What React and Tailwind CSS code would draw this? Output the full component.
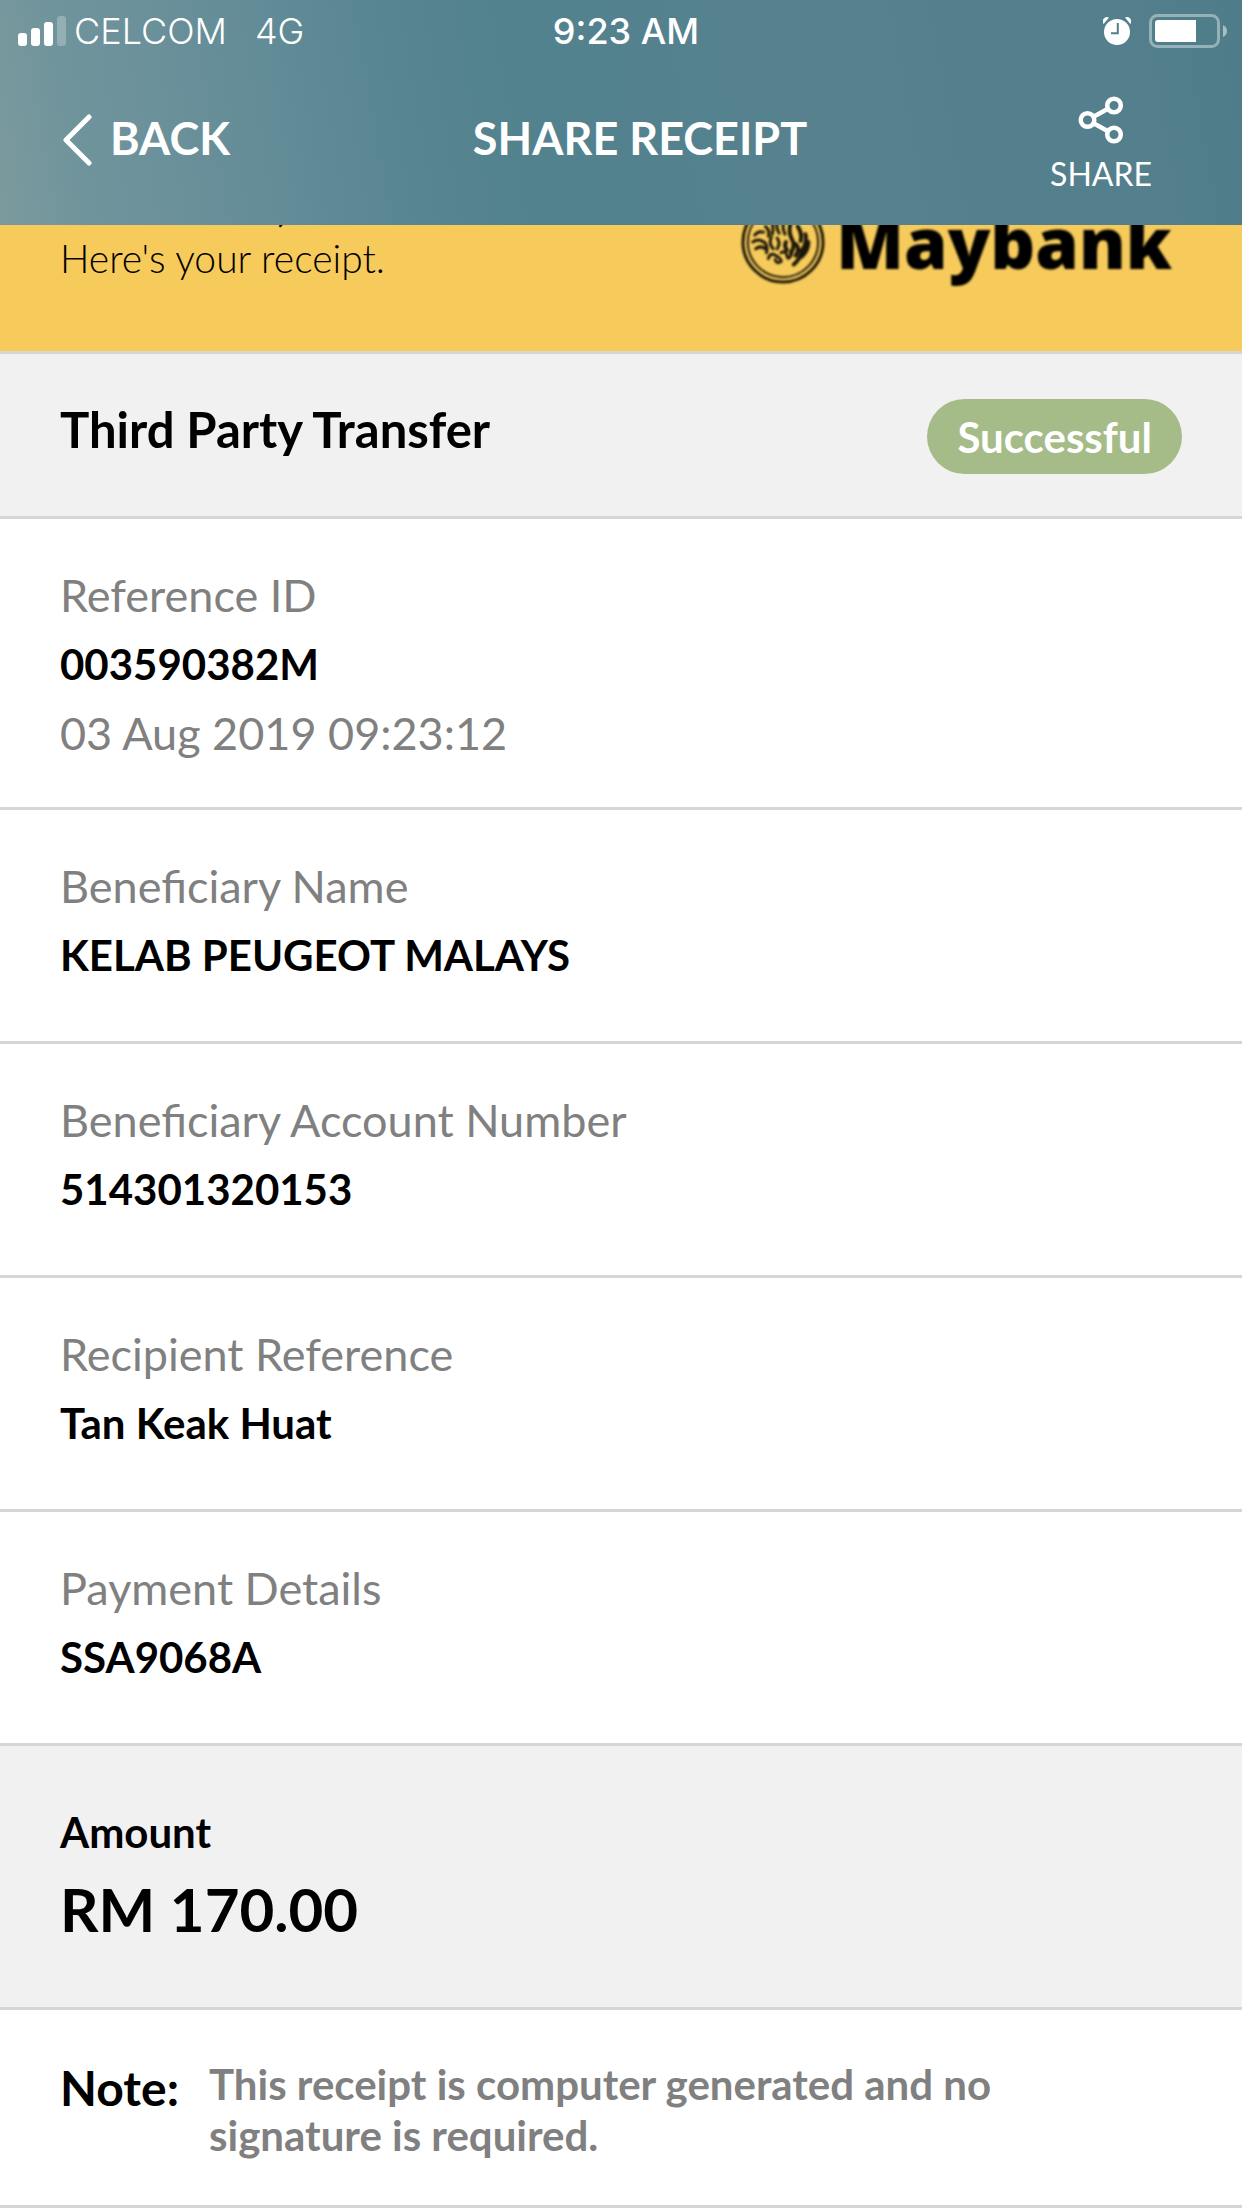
const details = [
  { label: 'Reference ID', value: '003590382M', extra: '03 Aug 2019 09:23:12' },
  { label: 'Beneficiary Name', value: 'KELAB PEUGEOT MALAYS' },
  { label: 'Beneficiary Account Number', value: '514301320153' },
  { label: 'Recipient Reference', value: 'Tan Keak Huat' },
  { label: 'Payment Details', value: 'SSA9068A' },
];

function SignalIcon() {
  return (
    <svg width="48" height="30" viewBox="0 0 48 30" fill="#fff" aria-hidden="true">
      <rect x="0" y="17" width="9" height="13" rx="3" />
      <rect x="13" y="12" width="9" height="18" rx="3" />
      <rect x="26" y="6" width="9" height="24" rx="3" />
      <rect x="39" y="0" width="9" height="30" rx="3" opacity=".25" />
    </svg>
  );
}

function AlarmIcon() {
  return (
    <svg width="28" height="28" viewBox="0 0 28 28" aria-hidden="true">
      <circle cx="14" cy="15" r="13" fill="#fff" />
      <path d="M0 6.500A4.500 4.500 0 0 1 6 .6L.8 6.800ZM28 6.500A4.500 4.500 0 0 0 22 .6L27.200 6.800Z" fill="#fff" />
      <path d="M14.800 6v10.300H8" fill="none" stroke="#50808c" strokeWidth="2" />
    </svg>
  );
}

function BatteryIcon() {
  return (
    <svg width="79" height="34" viewBox="0 0 79 34" aria-hidden="true">
      <rect x="1.500" y="1.500" width="68" height="31" rx="7" fill="none" stroke="#fff" strokeWidth="3" opacity=".4" />
      <path d="M9 6H47V28H9Q6 28 6 25V9Q6 6 9 6Z" fill="#fff" />
      <path d="M74 11Q78 13 78 17T74 23Z" fill="#fff" opacity=".5" />
    </svg>
  );
}

function ShareIcon() {
  return (
    <svg width="46" height="48" viewBox="0 0 46 48" fill="none" stroke="#fff" strokeWidth="4.500" aria-hidden="true">
      <circle cx="9.500" cy="24" r="6.800" />
      <circle cx="36" cy="9.500" r="6.800" />
      <circle cx="36" cy="38.500" r="6.800" />
      <path d="M15.500 20.700L30 12.800M15.500 27.300L30 35.200" />
    </svg>
  );
}

function TigerEmblem() {
  return (
    <svg width="84" height="84" viewBox="0 0 86 86" fill="none" stroke="#1a1608" strokeLinecap="round" aria-hidden="true">
      <circle cx="43" cy="43" r="41" strokeWidth="3" />
      <circle cx="43" cy="43" r="36" strokeWidth="2" />
      <path strokeWidth="3" d="M14 36q4-5 9-3M12 43q6-4 11 0M15 50q5-4 10 0M25 27q5 4 3 10M31 22q3 6 1 13M38 20q-3 7 1 14M45 19q-4 7 0 16M24 43q4 5 2 11M31 38q-3 7 2 12M37 39q4 5 0 11M28 60q2-7 8-3t5 6q-5 3-6-2M41 54q5-3 6 3t5-2" />
      <path strokeWidth="4" d="M51 23q-3 10 1 17t-1 14M58 27q5 7 3 15M66 35q2 9-4 17M56 45q5 5 0 12M69 43q0 9-7 15M63 52q-3 9-9 14M46 43q-2 5 1 8" />
    </svg>
  );
}

export default function App() {
  return (
    <div className="w-full bg-white font-['Lato',sans-serif] text-black">
      <header className="relative z-10 bg-[linear-gradient(80deg,#7b9a9d_0%,#70949c_7%,#6a909a_15%,#628c97_23%,#588691_32%,#52828e_42%,#53828e_54%,#58818e_66%,#53808c_78%,#53808c_90%,#4e7c88_100%)] text-white">
        <div className="grid h-[60px] grid-cols-[1fr_auto_1fr] items-center font-['Inter',sans-serif] text-[36px] leading-[62px]">
          <div className="flex items-center gap-2 pl-[18px]">
            <SignalIcon />
            <span className="font-light">CELCOM</span>
            <span className="pl-5 font-light">4G</span>
          </div>
          <div className="pl-[10px] font-medium">9:23 AM</div>
          <div className="flex items-center justify-end gap-[18px] pr-[14px]">
            <AlarmIcon />
            <BatteryIcon />
          </div>
        </div>
        <div className="grid h-[165px] grid-cols-[1fr_auto_1fr] items-start">
          <button type="button" className="mt-12 flex items-center gap-4 pl-[62px] text-[45px] leading-[60px] font-bold">
            <svg className="mt-1" width="32" height="52" viewBox="0 0 32 52" fill="none" stroke="#fff" strokeWidth="5" strokeLinecap="round" strokeLinejoin="round" aria-hidden="true">
              <path d="M27 3L4 26L27 49" />
            </svg>
            BACK
          </button>
          <h1 className="mt-12 pl-[38px] text-[45px] leading-[60px] font-bold">SHARE RECEIPT</h1>
          <button type="button" className="mt-9 mr-[90px] flex flex-col items-center justify-self-end text-[32px] leading-10">
            <ShareIcon />
            <span className="mt-[10px]">SHARE</span>
          </button>
        </div>
      </header>

      <main className="-mt-[90px]">
        <section className="flex items-start justify-between border-b-3 border-[#d6d6d6] bg-[#f6ca5b] pt-[42px] pr-[70px] pb-[66px] pl-[60px]">
          <div className="pt-1">
            <p className="text-[39px] leading-[52px] font-bold">Hi Customer,</p>
            <p className="text-[39px] leading-[50px] font-light">Here's your receipt.</p>
          </div>
          <div className="flex items-center gap-[11px] pt-[22px] blur-[1px]">
            <TigerEmblem />
            <span className="font-['Open_Sans',sans-serif] text-[70px] leading-[86px] font-extrabold">Maybank</span>
          </div>
        </section>

        <section className="flex items-start justify-between border-b-3 border-[#d6d6d6] bg-[#f1f1f1] px-[60px] pt-[45px] pb-[42px]">
          <h2 className="text-[49px] leading-[60px] font-bold">Third Party Transfer</h2>
          <span className="rounded-full bg-[#a5bc89] px-[30px] pt-[2px] text-[42px] leading-[73px] font-bold text-white">Successful</span>
        </section>

        <dl>
          {details.map((item, index) => (
            <div
              key={item.label}
              className={`border-b-3 border-[#d6d6d6] px-[60px] pt-[42px] leading-[69px] ${index === 0 ? 'pb-[39px]' : 'pb-[51px]'}`}
            >
              <dt className="text-[45px] text-[#808080]">{item.label}</dt>
              <dd className="text-[42px] font-bold">{item.value}</dd>
              {item.extra && <dd className="text-[45px] text-[#808080]">{item.extra}</dd>}
            </div>
          ))}
        </dl>

        <section className="border-b-3 border-[#d6d6d6] bg-[#f1f1f1] px-[60px] pt-[52px] pb-[55px]">
          <h3 className="text-[42px] leading-[69px] font-bold">Amount</h3>
          <p className="text-[60px] leading-[85px] font-bold">RM 170.00</p>
        </section>

        <section className="flex items-start gap-[30px] border-b-3 border-[#d6d6d6] px-[60px] pt-[49px] pb-[44px]">
          <h3 className="text-[48px] leading-[58px] font-bold">Note:</h3>
          <p className="max-w-[820px] text-[42px] leading-[51px] font-bold text-[#808080]">
            This receipt is computer generated and no signature is required.
          </p>
        </section>
      </main>
    </div>
  );
}
